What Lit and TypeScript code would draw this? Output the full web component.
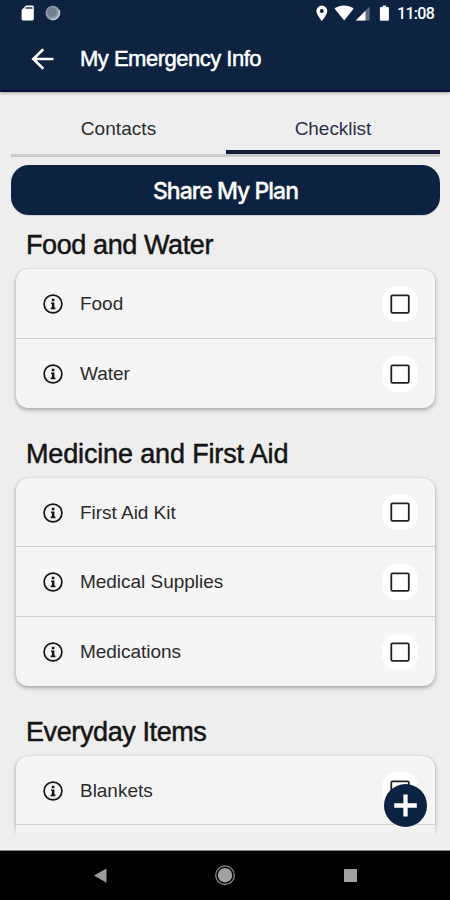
import { LitElement, html, css } from "lit";
import { customElement, property } from "lit/decorators.js";

interface Section {
  title: string;
  tracking: string;
  items: string[];
}

const SECTIONS: Section[] = [
  { title: "Food and Water", tracking: "normal", items: ["Food", "Water"] },
  { title: "Medicine and First Aid", tracking: "wide", items: ["First Aid Kit", "Medical Supplies", "Medications"] },
  { title: "Everyday Items", tracking: "normal", items: ["Blankets", ""] },
];

@customElement("status-bar")
class StatusBar extends LitElement {
  static styles = css`
    :host { display: block; height: 27px; }
    .bar { display: flex; align-items: center; height: 27px; padding-right: 16px; }
    .clock {
      width: 37px;
      margin-left: 7px;
      font: 500 16px/27px Roboto, sans-serif;
      letter-spacing: -0.7px;
      white-space: nowrap;
    }
    .left { flex: 1; display: block; }
    svg { display: block; }
  `;
  render() {
    return html`
      <div class="bar">
        <div class="left">
          <svg width="66" height="27" viewBox="0 0 66 27">
            <path fill="#fff" d="M26 5.5h6.4q1.4 0 1.4 1.4v12.2q0 1.4-1.4 1.4H23q-1.4 0-1.4-1.4V10z" />
            <path stroke="#5b6a7f" stroke-width="2" d="M25.5 8h7" />
            <circle cx="52.8" cy="13" r="7.3" fill="#8b98a6" />
            <circle cx="51.8" cy="12" r="4.8" fill="#71808f" />
            <path d="M59 10a7 7 0 0 1-8 9.3" fill="none" stroke="#bcc5cd" stroke-width="1.6" />
          </svg>
        </div>
        <svg width="75" height="27" viewBox="0 0 75 27">
          <path fill="#fff" fill-rule="evenodd" d="M6.8 5.6a5.4 5.4 0 0 0-5.4 5.4c0 3.9 5.4 9.9 5.4 9.9s5.5-6 5.5-9.9a5.4 5.4 0 0 0-5.5-5.4zm0 3.4a2 2 0 1 1 0 4 2 2 0 0 1 0-4z" />
          <path fill="#fff" d="M19.5 8.6C25.2 4.3 32.9 4.3 38.7 8.6L29.2 20.5z" />
          <path fill="#5c6b7f" d="M54.6 6.6V20.5H40.8z" />
          <path fill="#fff" d="M50.5 10.7V20.5H40.8z" />
          <path fill="#fff" d="M67.6 5.5h3.6v1.6h1.7q1 0 1 1v11.7q0 1-1 1h-7q-1 0-1-1V8.1q0-1 1-1h1.7z" />
        </svg>
        <span class="clock">11:08</span>
      </div>
    `;
  }
}

@customElement("checklist-row")
class ChecklistRow extends LitElement {
  @property() label = "";
  static styles = css`
    :host { display: block; }
    .row {
      display: flex;
      align-items: center;
      box-sizing: border-box;
      height: 100%;
      padding: 2px 16px 0 27px;
    }
    .label {
      flex: 1;
      margin-left: 17px;
      font-size: 19px;
      line-height: 24px;
      letter-spacing: -0.03px;
      color: #2b2b2b;
      white-space: nowrap;
    }
    svg { display: block; }
  `;
  render() {
    return html`
      <div class="row">
        <svg width="20" height="20" viewBox="0 0 20 20">
          <circle cx="10" cy="10" r="8.9" fill="none" stroke="#151515" stroke-width="1.7" />
          <path fill="#151515" d="M8.8 4.7h2.6v2.5H8.8zM8 8.4h3.4v5h1v1.8H7.7v-1.8h1.2V10H8z" />
        </svg>
        <span class="label">${this.label}</span>
        <svg width="37" height="37" viewBox="0 0 37 37">
          <rect x="0" y="0" width="36" height="36" rx="15" fill="#fff" />
          <rect x="9.3" y="9.3" width="17.5" height="17.5" rx="1.3" fill="none" stroke="#222" stroke-width="1.8" />
        </svg>
      </div>
    `;
  }
}

@customElement("app-root")
class AppRoot extends LitElement {
  static styles = css`
    :host {
      display: flex;
      flex-direction: column;
      position: relative;
      box-sizing: border-box;
      width: 450px;
      height: 900px;
      overflow: hidden;
      background: #eeeeee;
      font-family: "Liberation Sans", Arial, sans-serif;
      color: #151515;
    }
    .header {
      flex: none;
      height: 92px;
      box-sizing: border-box;
      background: #0d2340;
      border-bottom: 2px solid #07113a;
      color: #fff;
      box-shadow: 0 1px 3px rgba(0, 0, 0, 0.35);
    }
    .title-row { display: flex; align-items: center; height: 64px; padding-left: 31px; }
    .title {
      margin-left: 26px;
      font-size: 22px;
      letter-spacing: -0.5px;
      -webkit-text-stroke: 0.5px #fff;
    }
    .tabs {
      flex: none;
      display: grid;
      grid-template-columns: 215px 214px;
      height: 62px;
      margin: 0 10px 0 11px;
      border-bottom: 3px solid #cbcbcb;
    }
    .tab {
      display: flex;
      justify-content: center;
      height: 58px;
      font-size: 19px;
      line-height: 74px;
      letter-spacing: 0.05px;
      color: #2d2d2d;
    }
    .tab.active { color: #303149; border-bottom: 4px solid #161c3d; letter-spacing: -0.05px; }
    .share {
      flex: none;
      display: block;
      height: 50px;
      margin: 8px 10px 0 11px;
      padding: 0;
      border: 0;
      border-radius: 18px;
      background: #0b2240;
      color: #fff;
      font: 500 23px/52px Inter, "Liberation Sans", sans-serif;
      letter-spacing: -0.98px;
      -webkit-text-stroke: 0.3px #fff;
      box-shadow: 0 1px 1px rgba(0, 0, 0, 0.12);
    }
    .list { height: 621px; padding: 0 15px 0 16px; overflow: hidden; }
    .heading {
      margin: 0;
      height: 69.5px;
      padding-left: 10px;
      font-size: 27px;
      font-weight: 400;
      line-height: 92px;
      letter-spacing: -0.4px;
      -webkit-text-stroke: 0.5px #151515;
      white-space: nowrap;
    }
    .heading.wide { letter-spacing: -0.15px; }
    .section:first-child .heading { height: 54px; line-height: 61px; }
    .card {
      border-radius: 12px;
      background: #f5f5f5;
      box-shadow: 0 2px 4px rgba(0, 0, 0, 0.3), 0 0 1px rgba(0, 0, 0, 0.2);
    }
    .item { height: 69.5px; box-sizing: border-box; }
    .item:not(:last-child) { border-bottom: 1.5px solid #cfcfcf; }
    .fade {
      position: absolute;
      left: 0;
      right: 0;
      top: 825px;
      height: 25px;
      background: linear-gradient(rgba(238, 238, 238, 0.1), #eee 11px);
    }
    .fab {
      position: absolute;
      left: 384px;
      top: 784px;
      width: 43px;
      height: 43px;
    }
    .nav {
      position: absolute;
      left: 0;
      right: 0;
      bottom: 0;
      height: 49px;
      background: #000;
      border-top: 1px solid #858585;
    }
    svg { display: block; }
  `;
  render() {
    return html`
      <header class="header">
        <status-bar></status-bar>
        <div class="title-row">
          <svg width="23" height="24" viewBox="0 0 23 24">
            <path d="M12.3 2.2L2.3 12l10 9.8M2 12H22.5" fill="none" stroke="#fff" stroke-width="2.6" />
          </svg>
          <span class="title">My Emergency Info</span>
        </div>
      </header>
      <nav class="tabs">
        <span class="tab">Contacts</span>
        <span class="tab active">Checklist</span>
      </nav>
      <button class="share">Share My Plan</button>
      <main class="list">
        ${SECTIONS.map(
          (section) => html`
            <section class="section">
              <h2 class="heading ${section.tracking}">${section.title}</h2>
              <div class="card">
                ${section.items.map((item) => html`<checklist-row class="item" .label=${item}></checklist-row>`)}
              </div>
            </section>
          `
        )}
      </main>
      <div class="fade"></div>
      <svg class="fab" viewBox="0 0 43 43">
        <circle cx="21.5" cy="21.5" r="21.5" fill="#0b2240" />
        <path d="M21.5 10.5v22M10.3 21.5h22.5" stroke="#fff" stroke-width="4.3" />
      </svg>
      <footer class="nav">
        <svg width="450" height="49" viewBox="0 0 450 49">
          <path d="M94 24.5L106.5 17.5V31.8z" fill="#9b9b9b" />
          <circle cx="225" cy="24.2" r="9.3" fill="none" stroke="#8c8c8c" stroke-width="1.3" />
          <circle cx="225" cy="24.2" r="7.2" fill="#a1a1a1" />
          <rect x="344" y="18" width="13" height="13" rx="0.5" fill="#a1a1a1" />
        </svg>
      </footer>
    `;
  }
}
